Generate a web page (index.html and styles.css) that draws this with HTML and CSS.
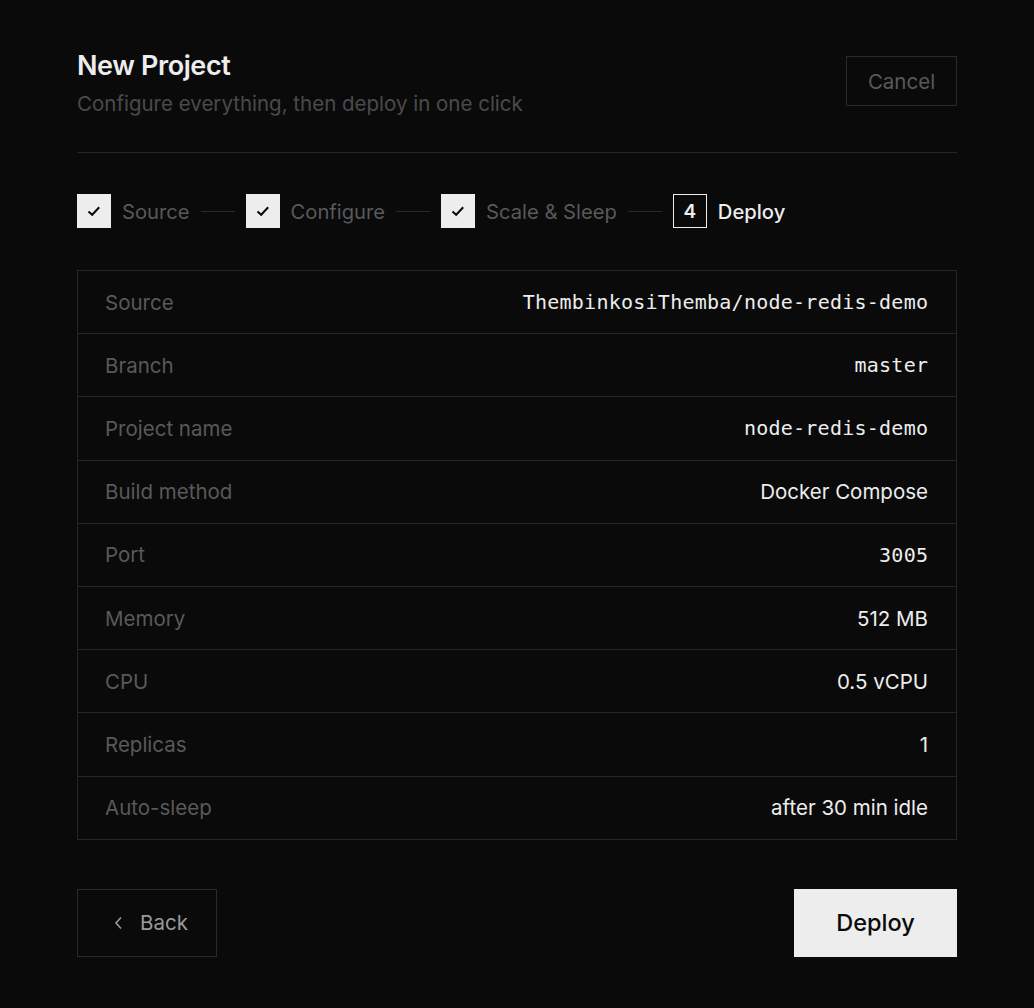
FILE: index.html
```html
<!DOCTYPE html>
<html lang="en">
<head>
  <meta charset="UTF-8">
  <title>New Project</title>
  <link rel="stylesheet" href="styles.css">
</head>
<body>
<div id="app">
  <div class="header">
    <div class="heading">
      <div class="title">New Project</div>
      <div class="subtitle">Configure everything, then deploy in one click</div>
    </div>
    <button class="button cancel">Cancel</button>
  </div>

  <div class="steps">
    <div class="step done">
      <span class="box"><svg width="16" height="16" viewBox="0 0 16 16"><path d="M2.5 8.5 L6.2 11.8 L13.2 4.2" fill="none" stroke="#0a0a0a" stroke-width="2"/></svg></span>
      <span class="label">Source</span>
    </div>
    <span class="line"></span>
    <div class="step done">
      <span class="box"><svg width="16" height="16" viewBox="0 0 16 16"><path d="M2.5 8.5 L6.2 11.8 L13.2 4.2" fill="none" stroke="#0a0a0a" stroke-width="2"/></svg></span>
      <span class="label">Configure</span>
    </div>
    <span class="line"></span>
    <div class="step done">
      <span class="box"><svg width="16" height="16" viewBox="0 0 16 16"><path d="M2.5 8.5 L6.2 11.8 L13.2 4.2" fill="none" stroke="#0a0a0a" stroke-width="2"/></svg></span>
      <span class="label">Scale &amp; Sleep</span>
    </div>
    <span class="line"></span>
    <div class="step active">
      <span class="box">4</span>
      <span class="label">Deploy</span>
    </div>
  </div>

  <div class="summary">
    <div class="row"><span class="key">Source</span><span class="value mono">ThembinkosiThemba/node-redis-demo</span></div>
    <div class="row"><span class="key">Branch</span><span class="value mono">master</span></div>
    <div class="row"><span class="key">Project name</span><span class="value mono">node-redis-demo</span></div>
    <div class="row"><span class="key">Build method</span><span class="value">Docker Compose</span></div>
    <div class="row"><span class="key">Port</span><span class="value mono">3005</span></div>
    <div class="row"><span class="key">Memory</span><span class="value">512 MB</span></div>
    <div class="row"><span class="key">CPU</span><span class="value">0.5 vCPU</span></div>
    <div class="row"><span class="key">Replicas</span><span class="value">1</span></div>
    <div class="row"><span class="key">Auto-sleep</span><span class="value">after 30 min idle</span></div>
  </div>

  <div class="actions">
    <button class="button back">
      <svg width="12" height="14" viewBox="0 0 12 14"><path d="M8 1.5 L3 7 L8 12.5" fill="none" stroke="#9a9a9a" stroke-width="1.6"/></svg>
      <span>Back</span>
    </button>
    <button class="button deploy">Deploy</button>
  </div>
</div>
</body>
</html>
```

FILE: styles.css
```css
html, body {
    margin: 0;
    padding: 0;
    background: #0a0a0a;
    color: #ededed;
    font-family: Inter, "Noto Sans", sans-serif;
}

#app {
    width: 880px;
    padding: 50px 77px;
}

.button {
    font-family: Inter, "Noto Sans", sans-serif;
    background: transparent;
    border: 1px solid #2a2a2a;
    cursor: pointer;
}

/* header */

.header {
    display: flex;
    justify-content: space-between;
    align-items: flex-start;
    padding-bottom: 34px;
    border-bottom: 1px solid #262626;
}

.title {
    font-size: 27px;
    line-height: 32px;
    font-weight: 600;
    letter-spacing: -0.4px;
}

.subtitle {
    margin-top: 8px;
    font-size: 20.5px;
    line-height: 28px;
    color: #4a4a4a;
}

.cancel {
    margin-top: 6px;
    width: 111px;
    height: 50px;
    font-size: 20.5px;
    color: #595959;
}

/* steps */

.steps {
    display: flex;
    align-items: center;
    margin-top: 41px;
}

.step {
    display: flex;
    align-items: center;
    gap: 11px;
}

.box {
    width: 34px;
    height: 34px;
    box-sizing: border-box;
    display: flex;
    align-items: center;
    justify-content: center;
}

.step.done .box {
    background: #ededed;
}

.step.active .box {
    border: 1px solid #ededed;
    font-size: 19px;
    font-weight: 600;
}

.label {
    font-size: 20.2px;
    color: #595959;
}

.step.active .label {
    color: #ededed;
    font-weight: 500;
}

.line {
    width: 34px;
    height: 1px;
    margin: 0 11px;
    background: #2a2a2a;
}

/* summary table */

.summary {
    margin-top: 42px;
    border: 1px solid #262626;
}

.row {
    height: 62.2px;
    padding: 0 28px 0 27px;
    display: flex;
    justify-content: space-between;
    align-items: center;
    border-top: 1px solid #262626;
}

.row:first-child {
    border-top: none;
}

.key {
    font-size: 20.5px;
    color: #595959;
}

.value {
    font-size: 20.5px;
    color: #ededed;
}

.mono {
    font-family: "DejaVu Sans Mono", "Liberation Mono", monospace;
    font-size: 20px;
    letter-spacing: 0.25px;
    margin-right: -0.25px;
}

/* bottom buttons */

.actions {
    margin-top: 49px;
    display: flex;
    justify-content: space-between;
}

.back {
    width: 140px;
    height: 68px;
    display: flex;
    align-items: center;
    gap: 15px;
    padding: 0 0 0 35px;
    font-size: 20.5px;
    color: #9a9a9a;
}

.deploy {
    width: 163px;
    height: 68px;
    border: none;
    background: #ededed;
    color: #0a0a0a;
    font-size: 23.5px;
    font-weight: 500;
}
```
